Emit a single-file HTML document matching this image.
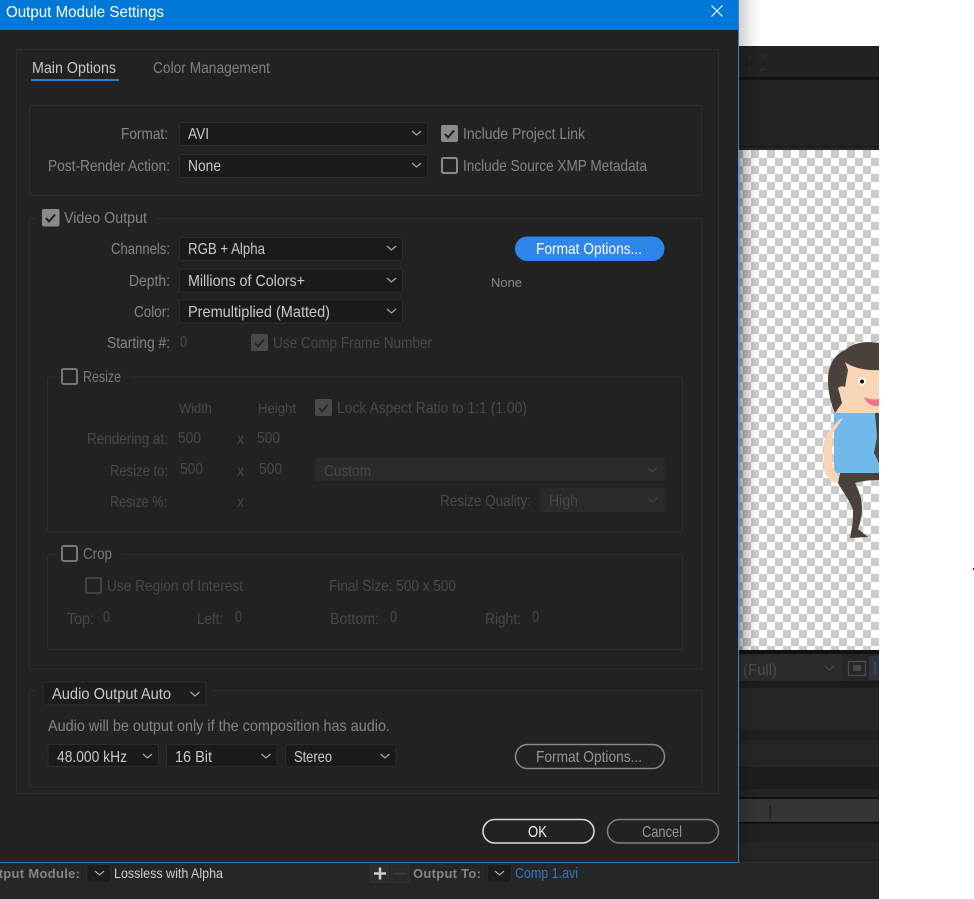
<!DOCTYPE html>
<html><head><meta charset="utf-8"><title>Output Module Settings</title>
<style>
html,body{margin:0;padding:0;background:#fff;width:974px;height:899px;overflow:hidden}
svg{display:block;filter:blur(.3px)}
text{font-family:"Liberation Sans",sans-serif;font-size:16px;fill:#868686}
.v{fill:#cacaca}.d{fill:#494949}.m{fill:#7a7a7a}
.p{fill:none;stroke:#2e2e2e;stroke-width:1}
.s{fill:#1a1a1a;stroke:#2d2d2d;stroke-width:1}
.c{fill:none;stroke:#a8a8a8;stroke-width:1.2}
.b{font-weight:bold;font-size:13px;fill:#858585}
</style></head><body>
<svg width="974" height="899" viewBox="0 0 974 899" xmlns="http://www.w3.org/2000/svg">
<defs>
<pattern id="ck" x="743" y="150" width="16" height="16" patternUnits="userSpaceOnUse">
<rect width="16" height="16" fill="#fff"/><rect x="8" width="8" height="8" fill="#cbcbcb"/><rect y="8" width="8" height="8" fill="#cbcbcb"/>
</pattern>
<linearGradient id="sh" x1="0" x2="1" y1="0" y2="0"><stop offset="0" stop-color="#000" stop-opacity=".38"/><stop offset=".5" stop-color="#000" stop-opacity=".14"/><stop offset="1" stop-color="#000" stop-opacity="0"/></linearGradient>
</defs>

<!-- background app -->
<rect x="739" y="46" width="140" height="31" fill="#222"/>
<rect x="739" y="77" width="140" height="3" fill="#131313"/>
<rect x="739" y="80" width="140" height="66" fill="#232323"/>
<rect x="739" y="146" width="140" height="1" fill="#111"/>
<rect x="739" y="147" width="140" height="3" fill="#242424"/>
<path d="M749 60v-4h4M760 56h4v4M764 66v4h-4M753 70h-4v-4" fill="none" stroke="#26303c" stroke-width="1.2"/>
<rect x="739" y="150" width="140" height="500" fill="url(#ck)"/>

<!-- character -->
<path d="M834 413h45v60h-45z" fill="#70b9ea"/>
<path d="M875 413h4v50l-5-10 3-16z" fill="#4a403c"/>
<path d="M838 362l41 4v47h-41z" fill="#f9d6b6"/>
<path d="M879 343c-12-2-25-1-34 7-10 4-17 15-17 30 0 12 3 24 7 33l7-10-2-8-2-7c2-2 5-2 7-1l3-17-3-8c6 5 20 9 34 8z" fill="#4a403c"/>
<circle cx="862" cy="381.500" r="4" fill="#fff"/><circle cx="862" cy="381.500" r="2" fill="#111"/>
<path d="M864 397c5 2 10 3 15 2v7c-7 1-13-3-15-9z" fill="#ef7488"/>
<path d="M843 418l-10 15c-1 12-1 25 0 34l7 13-5 3c-6-3-11-8-11-16v-24c1-8 5-12 9-16 3-4 6-8 10-9z" fill="#f9d6b6"/>
<path d="M840 473h39v7c-9 0-17 1-24 3 4 8 7 16 7 24 0 8-1 14-4 22l10 8-18 1 2-11c1-6 1-12 1-17-3-9-10-18-15-27z" fill="#4a403c"/>

<rect x="739" y="650" width="140" height="4" fill="#111"/>
<rect x="739" y="654" width="140" height="27" fill="#262626"/>
<rect x="739" y="654" width="103" height="27" fill="#2b2b2b"/>
<text x="743" y="675" style="font-size:16px;fill:#505050" textLength="34" lengthAdjust="spacingAndGlyphs">(Full)</text>
<path d="M825 666l4.500 4 4.500-4" class="c" style="stroke:#4c4c4c"/>
<rect x="848.500" y="661.500" width="17" height="14" fill="none" stroke="#4a4a4a" stroke-width="1.400"/>
<rect x="853" y="665" width="8" height="6" fill="#4a4a4a"/>
<rect x="869" y="656" width="10" height="24" fill="#303338"/>
<rect x="874" y="662" width="2" height="13" fill="#2c4a6b"/>
<rect x="739" y="681" width="140" height="7" fill="#1c1c1c"/>
<rect x="739" y="688" width="140" height="43" fill="#252525"/>
<rect x="739" y="731" width="140" height="9" fill="#1f1f1f"/>
<rect x="739" y="740" width="140" height="27" fill="#252525"/>
<rect x="739" y="767" width="140" height="22" fill="#1d1d1d"/>
<rect x="739" y="789" width="140" height="8" fill="#242424"/>
<rect x="739" y="797" width="140" height="2" fill="#111"/>
<rect x="739" y="799" width="140" height="23" fill="#343434"/>
<rect x="769.500" y="805" width="1.500" height="13" fill="#1e1e1e"/>
<rect x="739" y="822" width="140" height="1.500" fill="#0c0c0c"/>
<rect x="739" y="823.500" width="140" height="19" fill="#212121"/>
<rect x="739" y="842.500" width="140" height="20" fill="#252525"/>
<rect x="739" y="862" width="140" height="1" fill="#303030"/>
<rect x="0" y="863" width="879" height="36" fill="#262626"/>
<rect x="739" y="0" width="22" height="150" fill="url(#sh)" style="opacity:.5"/>
<rect x="739" y="150" width="18" height="500" fill="url(#sh)"/>
<rect x="739" y="650" width="22" height="212" fill="url(#sh)" style="opacity:.4"/>
<rect x="973" y="568" width="1" height="2" fill="#1010d0"/>

<!-- bottom strip -->
<text x="-20" y="878" class="b" textLength="100" lengthAdjust="spacing">Output Module:</text>
<rect x="86.500" y="864.500" width="24" height="18" fill="#1c1c1c" stroke="#2b2b2b"/>
<path d="M95 871l4.500 4 4.500-4" class="c"/>
<text x="114" y="878" style="font-size:14px;fill:#d0d0d0" textLength="109" lengthAdjust="spacingAndGlyphs">Lossless with Alpha</text>
<rect x="370.500" y="864.500" width="18" height="18" fill="#2c2c2c" stroke="#303030"/>
<path d="M374 873.500h12M380 867.500v12" stroke="#d0d0d0" stroke-width="2.500"/>
<rect x="391" y="864.500" width="18" height="18" fill="#2a2a2a" stroke="#303030"/>
<path d="M394 873.500h12" stroke="#3f3f3f" stroke-width="2"/>
<text x="413" y="878" class="b" textLength="68" lengthAdjust="spacing">Output To:</text>
<rect x="487.500" y="864.500" width="24" height="18" fill="#1c1c1c" stroke="#2b2b2b"/>
<path d="M495 871l4.500 4 4.500-4" class="c"/>
<text x="515" y="878" style="font-size:14.500px;fill:#2f78c4" textLength="63" lengthAdjust="spacingAndGlyphs">Comp 1.avi</text>

<!-- dialog -->
<rect x="0" y="30" width="738" height="832" fill="#222"/>
<rect x="0" y="0" width="738" height="30" fill="#0078d7"/>
<rect x="738" y="0" width="1" height="863" fill="#3b82c4"/>
<rect x="0" y="862" width="739" height="1" fill="#3478b8"/>
<rect x="738" y="150" width="1.500" height="500" fill="#4a9ce6"/>
<text x="6" y="17" style="font-size:16px;fill:#fff" textLength="158" lengthAdjust="spacingAndGlyphs">Output Module Settings</text>
<path d="M711.500 5.500l11 11M722.500 5.500l-11 11" stroke="#fff" stroke-width="1.100" fill="none"/>

<rect x="16.500" y="49.500" width="702" height="744" rx="2" class="p"/>
<text x="32" y="73" style="fill:#c8c8c8" textLength="84" lengthAdjust="spacingAndGlyphs">Main Options</text>
<rect x="31" y="79" width="88" height="2" fill="#2f7bd0"/>
<text x="153" y="73" style="fill:#808080" textLength="117" lengthAdjust="spacingAndGlyphs">Color Management</text>

<rect x="29.500" y="105.500" width="672" height="90" rx="2" class="p"/>
<text x="121" y="139" textLength="47" lengthAdjust="spacingAndGlyphs">Format:</text>
<rect x="179.500" y="122.500" width="248" height="23" rx="2" class="s"/>
<text x="188" y="139" class="v" textLength="21" lengthAdjust="spacingAndGlyphs">AVI</text>
<path d="M412 131l4.500 4 4.500-4" class="c"/>
<text x="48" y="171" textLength="122" lengthAdjust="spacingAndGlyphs">Post-Render Action:</text>
<rect x="179.500" y="154.500" width="248" height="23" rx="2" class="s"/>
<text x="188" y="171" class="v" textLength="33" lengthAdjust="spacingAndGlyphs">None</text>
<path d="M412 163l4.500 4 4.500-4" class="c"/>

<rect x="441" y="125" width="17" height="17" rx="2" fill="#8a8a8a"/>
<path d="M445 134l3 3.500 6-7" fill="none" stroke="#1d1d1d" stroke-width="2"/>
<text x="463" y="139" textLength="122" lengthAdjust="spacingAndGlyphs">Include Project Link</text>
<rect x="442" y="158" width="15" height="15" rx="1.500" fill="none" stroke="#8a8a8a" stroke-width="2"/>
<text x="463" y="171" textLength="184" lengthAdjust="spacingAndGlyphs">Include Source XMP Metadata</text>

<!-- video output -->
<path d="M36 218.500h-5a2 2 0 0 0-2 2V667a2 2 0 0 0 2 2h669a2 2 0 0 0 2-2V220.500a2 2 0 0 0-2-2H156" class="p"/>
<rect x="42" y="209" width="17.500" height="17.500" rx="2" fill="#8a8a8a"/>
<path d="M46 218l3 3.500 6-7" fill="none" stroke="#1d1d1d" stroke-width="2"/>
<text x="64" y="223" textLength="83" lengthAdjust="spacingAndGlyphs">Video Output</text>

<text x="111" y="254" textLength="59" lengthAdjust="spacingAndGlyphs">Channels:</text>
<rect x="179.500" y="237.500" width="223" height="23" rx="2" class="s"/>
<text x="188" y="254" class="v" textLength="77" lengthAdjust="spacingAndGlyphs">RGB + Alpha</text>
<path d="M387 246l4.500 4 4.500-4" class="c"/>
<text x="129" y="286" textLength="41" lengthAdjust="spacingAndGlyphs">Depth:</text>
<rect x="179.500" y="269" width="223" height="23" rx="2" class="s"/>
<text x="188" y="286" class="v" textLength="117" lengthAdjust="spacingAndGlyphs">Millions of Colors+</text>
<path d="M387 278l4.500 4 4.500-4" class="c"/>
<text x="134" y="317" textLength="36" lengthAdjust="spacingAndGlyphs">Color:</text>
<rect x="179.500" y="300" width="223" height="23" rx="2" class="s"/>
<text x="188" y="317" class="v" textLength="142" lengthAdjust="spacingAndGlyphs">Premultiplied (Matted)</text>
<path d="M387 309l4.500 4 4.500-4" class="c"/>

<rect x="515" y="236.500" width="149.500" height="24.500" rx="12.250" fill="#2d86e8"/>
<text x="536" y="254" style="fill:#fff" textLength="106" lengthAdjust="spacingAndGlyphs">Format Options...</text>
<text x="491" y="287" style="font-size:13px;fill:#8a8a8a" textLength="31" lengthAdjust="spacingAndGlyphs">None</text>

<text x="107" y="348" textLength="63" lengthAdjust="spacingAndGlyphs">Starting #:</text>
<text x="180" y="347" class="d" textLength="7" lengthAdjust="spacingAndGlyphs">0</text>
<rect x="251" y="334" width="17" height="17" rx="2" fill="#4a4a4a"/>
<path d="M255 343l3 3.500 6-7" fill="none" stroke="#262626" stroke-width="2"/>
<text x="273" y="348" class="d" textLength="159" lengthAdjust="spacingAndGlyphs">Use Comp Frame Number</text>

<!-- resize -->
<path d="M55 377h-5.500a2 2 0 0 0-2 2V530a2 2 0 0 0 2 2h631a2 2 0 0 0 2-2V379a2 2 0 0 0-2-2H131" class="p"/>
<rect x="62" y="369" width="15" height="15" rx="1.500" fill="none" stroke="#777" stroke-width="2"/>
<text x="83" y="382" class="m" textLength="38" lengthAdjust="spacingAndGlyphs">Resize</text>
<text x="179" y="413" class="d" style="font-size:14px" textLength="33" lengthAdjust="spacingAndGlyphs">Width</text>
<text x="258" y="413" class="d" style="font-size:14px" textLength="38" lengthAdjust="spacingAndGlyphs">Height</text>
<rect x="315" y="399" width="17" height="17" rx="2" fill="#4a4a4a"/>
<path d="M319 408l3 3.500 6-7" fill="none" stroke="#262626" stroke-width="2"/>
<text x="337" y="413" class="d" textLength="190" lengthAdjust="spacingAndGlyphs">Lock Aspect Ratio to 1:1 (1.00)</text>
<text x="87" y="444" class="d" textLength="81" lengthAdjust="spacingAndGlyphs">Rendering at:</text>
<text x="178" y="443" class="d" textLength="23" lengthAdjust="spacingAndGlyphs">500</text>
<text x="237" y="444" class="d" textLength="7" lengthAdjust="spacingAndGlyphs">x</text>
<text x="257" y="443" class="d" textLength="23" lengthAdjust="spacingAndGlyphs">500</text>
<text x="110" y="476" class="d" textLength="58" lengthAdjust="spacingAndGlyphs">Resize to:</text>
<text x="180" y="474" class="d" textLength="23" lengthAdjust="spacingAndGlyphs">500</text>
<text x="237" y="476" class="d" textLength="7" lengthAdjust="spacingAndGlyphs">x</text>
<text x="259" y="474" class="d" textLength="23" lengthAdjust="spacingAndGlyphs">500</text>
<rect x="315" y="458" width="349.500" height="23" rx="1" fill="#2a2a2a"/>
<text x="324" y="476" class="d" textLength="47" lengthAdjust="spacingAndGlyphs">Custom</text>
<path d="M648 468l4.500 4 4.500-4" class="c" style="stroke:#484848"/>
<text x="110" y="507" class="d" textLength="57" lengthAdjust="spacingAndGlyphs">Resize %:</text>
<text x="237" y="507" class="d" textLength="7" lengthAdjust="spacingAndGlyphs">x</text>
<text x="440" y="506" class="d" textLength="91" lengthAdjust="spacingAndGlyphs">Resize Quality:</text>
<rect x="540" y="488" width="124.500" height="24" rx="1" fill="#2a2a2a"/>
<text x="549" y="506" class="d" textLength="29" lengthAdjust="spacingAndGlyphs">High</text>
<path d="M648 498l4.500 4 4.500-4" class="c" style="stroke:#484848"/>

<!-- crop -->
<path d="M55 554.500h-5.500a2 2 0 0 0-2 2V647.500a2 2 0 0 0 2 2h631a2 2 0 0 0 2-2V556.500a2 2 0 0 0-2-2H122" class="p"/>
<rect x="62" y="546" width="15" height="15" rx="1.500" fill="none" stroke="#777" stroke-width="2"/>
<text x="83" y="559" class="m" textLength="29" lengthAdjust="spacingAndGlyphs">Crop</text>
<rect x="86" y="578" width="15" height="15" rx="1" fill="none" stroke="#4a4a4a" stroke-width="1.600"/>
<text x="107" y="591" class="d" textLength="136" lengthAdjust="spacingAndGlyphs">Use Region of Interest</text>
<text x="329" y="591" class="d" textLength="127" lengthAdjust="spacingAndGlyphs">Final Size: 500 x 500</text>
<text x="67" y="624" class="d" textLength="27" lengthAdjust="spacingAndGlyphs">Top:</text>
<text x="103" y="622" class="d" textLength="7" lengthAdjust="spacingAndGlyphs">0</text>
<text x="197" y="624" class="d" textLength="26" lengthAdjust="spacingAndGlyphs">Left:</text>
<text x="235" y="622" class="d" textLength="7" lengthAdjust="spacingAndGlyphs">0</text>
<text x="330" y="624" class="d" textLength="49" lengthAdjust="spacingAndGlyphs">Bottom:</text>
<text x="390" y="622" class="d" textLength="7" lengthAdjust="spacingAndGlyphs">0</text>
<text x="485" y="624" class="d" textLength="36" lengthAdjust="spacingAndGlyphs">Right:</text>
<text x="532" y="622" class="d" textLength="7" lengthAdjust="spacingAndGlyphs">0</text>

<!-- audio -->
<path d="M36 690.500h-5a2 2 0 0 0-2 2V785a2 2 0 0 0 2 2h669a2 2 0 0 0 2-2V692.500a2 2 0 0 0-2-2H213" class="p"/>
<rect x="43" y="682" width="163" height="23" rx="2" class="s" style="fill:#1d1d1d"/>
<text x="52" y="699" class="v" textLength="119" lengthAdjust="spacingAndGlyphs">Audio Output Auto</text>
<path d="M190.500 692l4.500 4 4.500-4" class="c"/>
<text x="48" y="731" textLength="342" lengthAdjust="spacingAndGlyphs">Audio will be output only if the composition has audio.</text>
<rect x="48" y="744.500" width="110.500" height="22" rx="2" class="s"/>
<text x="57" y="762" class="v" textLength="70" lengthAdjust="spacingAndGlyphs">48.000 kHz</text>
<path d="M143 754l4.500 4 4.500-4" class="c"/>
<rect x="166.500" y="744.500" width="110.500" height="22" rx="2" class="s"/>
<text x="175" y="762" class="v" textLength="37" lengthAdjust="spacingAndGlyphs">16 Bit</text>
<path d="M261.500 754l4.500 4 4.500-4" class="c"/>
<rect x="285.500" y="744.500" width="110.500" height="22" rx="2" class="s"/>
<text x="294" y="762" class="v" textLength="38" lengthAdjust="spacingAndGlyphs">Stereo</text>
<path d="M380.500 754l4.500 4 4.500-4" class="c"/>
<rect x="515.500" y="744.500" width="149" height="24" rx="12" fill="none" stroke="#8a8a8a" stroke-width="1.500"/>
<text x="536" y="762" style="fill:#969696" textLength="106" lengthAdjust="spacingAndGlyphs">Format Options...</text>

<rect x="483" y="819.500" width="111" height="23.500" rx="11.750" fill="none" stroke="#d8d8d8" stroke-width="1.600"/>
<text x="528" y="837" style="fill:#f2f2f2" textLength="19" lengthAdjust="spacingAndGlyphs">OK</text>
<rect x="607.500" y="819.500" width="111" height="23.500" rx="11.750" fill="none" stroke="#808080" stroke-width="1.500"/>
<text x="642" y="837" style="fill:#969696" textLength="40" lengthAdjust="spacingAndGlyphs">Cancel</text>
</svg>
</body></html>
